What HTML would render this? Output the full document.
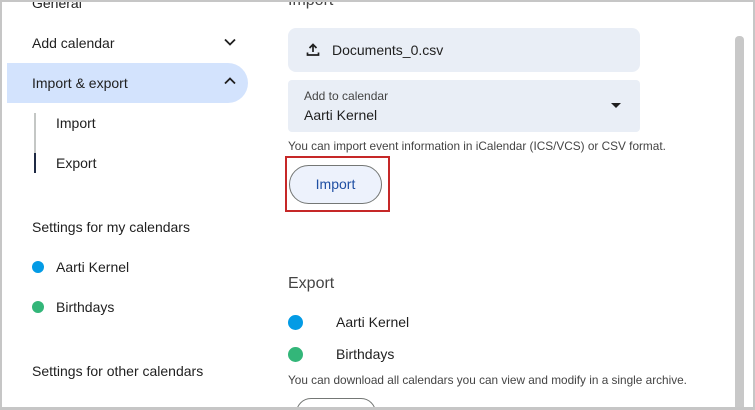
<!DOCTYPE html>
<html><head><meta charset="utf-8"><style>
*{margin:0;padding:0;box-sizing:border-box}
html,body{width:755px;height:410px;overflow:hidden}
body{background:#fff;font-family:"Liberation Sans",Arial,sans-serif;color:#1f1f1f;position:relative}
.clip{position:absolute;left:0;top:0;width:755px;height:407px;overflow:hidden}
.frame{position:absolute;left:0;top:0;width:755px;height:410px;border:2px solid #c6c6c6;border-bottom-width:3px;pointer-events:none}
.a{position:absolute;white-space:nowrap}
.nav{font-size:14px;color:#1f1f1f}
.dot{position:absolute;width:12px;height:12px;border-radius:50%}
</style></head><body>
<div class="clip">
<div class="a nav" style="left:32px;top:-5px">General</div>
<div class="a nav" style="left:32px;top:35px">Add calendar</div>
<svg class="a" style="left:223px;top:37px" width="14" height="10" viewBox="0 0 14 10"><path d="M2 2.5 L7 7.5 L12 2.5" fill="none" stroke="#1f1f1f" stroke-width="1.8"/></svg>
<div class="a" style="left:7px;top:63px;width:241px;height:40px;background:#d3e3fd;border-radius:0 20px 20px 0"></div>
<div class="a nav" style="left:32px;top:75px">Import &amp; export</div>
<svg class="a" style="left:223px;top:76px" width="14" height="10" viewBox="0 0 14 10"><path d="M2 7.5 L7 2.5 L12 7.5" fill="none" stroke="#1f1f1f" stroke-width="1.8"/></svg>
<div class="a" style="left:34px;top:113px;width:2px;height:40px;background:#c4c7c5"></div>
<div class="a" style="left:34px;top:153px;width:2px;height:20px;background:#1f2a44"></div>
<div class="a nav" style="left:56px;top:115px">Import</div>
<div class="a nav" style="left:56px;top:155px">Export</div>
<div class="a nav" style="left:32px;top:219px">Settings for my calendars</div>
<div class="dot" style="left:32px;top:261px;background:#039be5"></div>
<div class="a nav" style="left:56px;top:259px">Aarti Kernel</div>
<div class="dot" style="left:32px;top:301px;background:#33b679"></div>
<div class="a nav" style="left:56px;top:299px">Birthdays</div>
<div class="a nav" style="left:32px;top:363px">Settings for other calendars</div>

<div class="a" style="left:288px;top:-8px;font-size:16px;color:#444">Import</div>
<div class="a" style="left:288px;top:28px;width:352px;height:44px;background:#e9eef6;border-radius:8px"></div>
<svg class="a" style="left:305px;top:42px" width="16" height="16" viewBox="0 0 16 16"><path d="M8 2.5 V10 M4.5 6 L8 2.5 L11.5 6" fill="none" stroke="#1f1f1f" stroke-width="1.7"/><path d="M2.5 10.5 V13 H13.5 V10.5" fill="none" stroke="#1f1f1f" stroke-width="1.7"/></svg>
<div class="a" style="left:332px;top:42px;font-size:14px">Documents_0.csv</div>
<div class="a" style="left:288px;top:80px;width:352px;height:52px;background:#e9eef6;border-radius:4px"></div>
<div class="a" style="left:304px;top:89px;font-size:12px;color:#444">Add to calendar</div>
<div class="a" style="left:304px;top:107px;font-size:14px">Aarti Kernel</div>
<svg class="a" style="left:610px;top:102px" width="12" height="7" viewBox="0 0 12 7"><path d="M1 1 H11 L6 6 Z" fill="#1f1f1f"/></svg>
<div class="a" style="left:288px;top:139px;font-size:11.8px;color:#444">You can import event information in iCalendar (ICS/VCS) or CSV format.</div>
<div class="a" style="left:285px;top:156px;width:105px;height:56px;border:2px solid #c62828"></div>
<div class="a" style="left:289px;top:165px;width:93px;height:39px;border:1px solid #747775;border-radius:20px;background:#edf2fc;color:#1f4fa3;font-size:14px;text-align:center;line-height:37px">Import</div>

<div class="a" style="left:288px;top:275px;font-size:16px;color:#444">Export</div>
<div class="dot" style="left:288px;top:315px;width:15px;height:15px;background:#039be5"></div>
<div class="a" style="left:336px;top:314px;font-size:14px">Aarti Kernel</div>
<div class="dot" style="left:288px;top:347px;width:15px;height:15px;background:#33b679"></div>
<div class="a" style="left:336px;top:346px;font-size:14px">Birthdays</div>
<div class="a" style="left:288px;top:373px;font-size:11.8px;color:#444">You can download all calendars you can view and modify in a single archive.</div>
<div class="a" style="left:296px;top:398px;width:80px;height:30px;border:1px solid #747775;border-radius:16px"></div>

<div class="a" style="left:735px;top:36px;width:9px;height:380px;background:#c8c8c8;border-radius:4px 4px 0 0"></div>
</div>
<div class="frame"></div>
</body></html>
